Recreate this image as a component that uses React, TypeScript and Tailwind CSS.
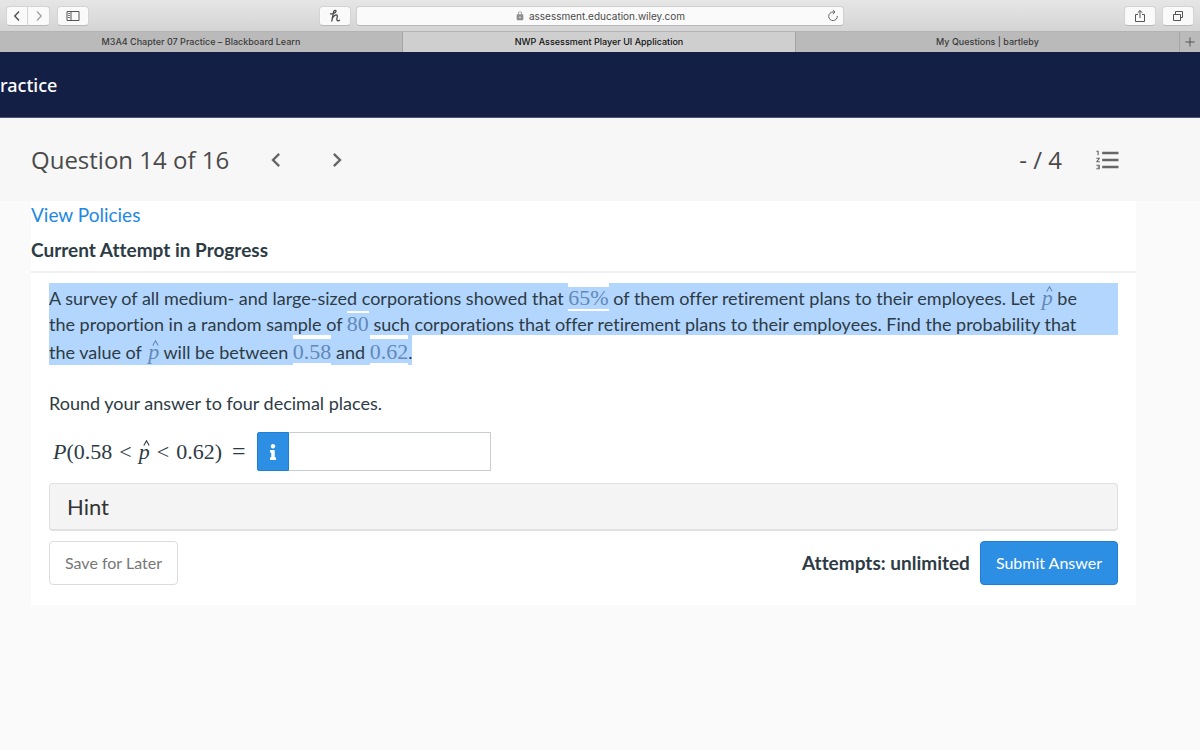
import React from 'react'
import { FaInfo } from 'react-icons/fa'
import { MdChevronLeft, MdChevronRight, MdFormatListNumbered, MdLock } from 'react-icons/md'
import { clsx } from 'clsx'

const tabs = [
  { title: 'M3A4 Chapter 07 Practice – Blackboard Learn', active: false, size: 'flex-[403]' },
  { title: 'NWP Assessment Player UI Application', active: true, size: 'flex-[393]' },
  { title: 'My Questions | bartleby', active: false, size: 'flex-[383]' },
]

interface ToolbarButtonProps {
  label: string
  className?: string
  children: React.ReactNode
}

function ToolbarButton({ label, className, children }: ToolbarButtonProps) {
  return (
    <button
      type="button"
      aria-label={label}
      className={clsx(
        'flex h-5 shrink-0 items-center justify-center rounded-[4px] border border-[#d4d4d4] border-b-[#b9b9b9] bg-[#fafafa] text-[#555]',
        className
      )}
    >
      {children}
    </button>
  )
}

function BrowserToolbar() {
  return (
    <div className="flex h-8 items-center border-b border-[#b4b4b4] bg-linear-to-b from-[#e6e6e6] to-[#d4d4d4] px-1.5">
      <div className="flex flex-[313]">
        <ToolbarButton label="Back" className="w-[22px] rounded-r-none">
          <svg width="8" height="12" viewBox="0 0 8 12" fill="none" stroke="currentColor" strokeWidth="1.5">
            <path d="M6 1.5 1.8 6 6 10.5" />
          </svg>
        </ToolbarButton>
        <ToolbarButton label="Forward" className="mr-[7px] w-[22px] rounded-l-none border-l-0">
          <svg width="8" height="12" viewBox="0 0 8 12" fill="none" stroke="#9c9c9c" strokeWidth="1.2">
            <path d="M2 1.5 6.2 6 2 10.5" />
          </svg>
        </ToolbarButton>
        <ToolbarButton label="Show sidebar" className="w-8">
          <svg width="14" height="12" viewBox="0 0 14 12" fill="none" stroke="currentColor">
            <path d="M1 1.5h12v9H1zM5 1.5v9" />
            <path d="M2 3.5h2M2 5.5h2M2 7.5h2" strokeWidth=".8" />
          </svg>
        </ToolbarButton>
      </div>

      <div className="flex flex-[525] gap-[5px]">
        <ToolbarButton label="Honey" className="w-8">
          <svg width="12" height="14" viewBox="0 0 12 14" fill="none" stroke="#4a4a4a" strokeWidth="1.3" strokeLinecap="round">
            <path d="M1.5 4.8C4 5 7 4 7 2.3 7 .9 5.2 1 4.6 2.8L2.8 12" />
            <path d="M3.4 9C5 6.2 8 4.8 8.3 6.6c.2 1.2-.7 2.8-.4 4.2.3 1.2 1.6 1.3 2.6.4" />
          </svg>
        </ToolbarButton>
        <div className="relative flex h-5 flex-1 items-center justify-center gap-1 rounded-[4px] border border-[#d0d0d0] border-b-[#b9b9b9] bg-[#fafafa]">
          <MdLock size={10} className="text-[#8e8e8e]" />
          <input
            aria-label="Address"
            defaultValue="assessment.education.wiley.com"
            className="field-sizing-content bg-transparent text-[10px] leading-4 text-[#4a4a4a] outline-none"
          />
          <button type="button" aria-label="Reload" className="absolute right-1 text-[#666]">
            <svg width="12" height="12" viewBox="0 0 12 12" fill="none" stroke="currentColor">
              <path d="M10.3 6A4.3 4.3 0 1 1 6 2h1.5" />
              <path d="M5.8 0 8 2 5.8 4" />
            </svg>
          </button>
        </div>
      </div>

      <div className="flex flex-[350] justify-end gap-1.5">
        <ToolbarButton label="Share" className="w-8">
          <svg width="12" height="14" viewBox="0 0 12 14" fill="none" stroke="currentColor">
            <path d="M4 5.5H1.5v7h9v-7H8M6 9V1.5M3.7 3.8 6 1.5l2.3 2.3" />
          </svg>
        </ToolbarButton>
        <ToolbarButton label="Show all tabs" className="w-8">
          <svg width="12" height="12" viewBox="0 0 12 12" fill="none" stroke="currentColor">
            <path d="M1.5 4.5h7v6h-7zM3.5 4V1.5h7v6H9" />
          </svg>
        </ToolbarButton>
      </div>
    </div>
  )
}

function TabStrip() {
  return (
    <div className="flex h-5 bg-[#bababa]">
      {tabs.map((tab) => (
        <button
          key={tab.title}
          type="button"
          className={clsx(
            'min-w-0 truncate border-r border-[#a5a5a5] px-2 text-[9px] font-medium',
            tab.size,
            tab.active ? 'bg-[#cfcfcf] text-[#111]' : 'text-[#3a3a3a]'
          )}
        >
          {tab.title}
        </button>
      ))}
      <button type="button" aria-label="New tab" className="flex flex-[21] items-center justify-center text-[#555]">
        <svg width="10" height="10" viewBox="0 0 10 10" fill="none" stroke="currentColor">
          <path d="M5 .5v9M.5 5h9" />
        </svg>
      </button>
    </div>
  )
}

// The accent sits clear of the letter, as in typeset math
function PHat() {
  return (
    <span className="relative inline-block leading-none">
      <i>p</i>
      <svg
        className="absolute -top-px left-1"
        width="7"
        height="6"
        viewBox="0 0 7 6"
        fill="none"
        stroke="currentColor"
        strokeWidth="1.1"
        aria-hidden="true"
      >
        <path d="M.8 5.5 3.5.8l2.7 4.7" />
      </svg>
    </span>
  )
}

// Math inside the highlighted text is tinted by the selection colour
function SelectedMath({ className, children }: { className: string; children: React.ReactNode }) {
  return (
    <span className={clsx("border-white font-['Liberation_Serif',serif] text-[22px] text-[#6289b8]", className)}>
      {children}
    </span>
  )
}

function QuestionText() {
  const number = 'inline-block align-top leading-[22px]'

  return (
    <p className="text-lg">
      <span className="block bg-[#b3d6ff] pt-0.5 leading-[26px]">
        A survey of all medium- and large-sized corporations showed that{' '}
        <SelectedMath className={clsx(number, '-mt-0.5 border-t-4 border-b-2')}>65%</SelectedMath> of them offer
        retirement plans to their employees. Let{' '}
        <SelectedMath className="pl-0.5 leading-none"><PHat /></SelectedMath> be
      </span>
      <span className="block bg-[#b3d6ff] pt-0.5 leading-[22px]">
        the proportion in a random sample of{' '}
        <SelectedMath className={clsx(number, '-mt-0.5 border-t-2')}>80</SelectedMath> such corporations that offer
        retirement plans to their employees. Find the probability that
      </span>
      <span className="block w-fit bg-[#b3d6ff] pt-1 leading-[26px]">
        the value of <SelectedMath className="pl-0.5 leading-none"><PHat /></SelectedMath> will be between{' '}
        <SelectedMath className={clsx(number, '-mt-1 border-t-4 border-b-2 pt-0.5')}>0.58</SelectedMath> and{' '}
        <SelectedMath className={clsx(number, '-mt-1 border-t-4 border-b-2 pt-0.5')}>0.62</SelectedMath>.
      </span>
    </p>
  )
}

export default function App() {
  return (
    <div className="min-h-screen bg-[#fafafa] font-[Lato,sans-serif] [font-variant-ligatures:none]">
      <div className="font-[Inter,sans-serif]">
        <BrowserToolbar />
        <TabStrip />
      </div>

      <header className="flex h-[66px] items-center border-b border-[#4a5478] bg-[#131f45]">
        <span className="font-['Noto_Sans',sans-serif] text-lg font-medium text-white">ractice</span>
      </header>

      <div className="flex h-[83px] items-center bg-[#f7f7f7] pr-[78px] pl-[31px] font-['Open_Sans',sans-serif] text-2xl text-[#4a4a4a]">
        <h1>Question 14 of 16</h1>
        <button type="button" aria-label="Previous question" className="ml-[33px] text-[#666]">
          <MdChevronLeft size={28} />
        </button>
        <button type="button" aria-label="Next question" className="ml-[33px] text-[#666]">
          <MdChevronRight size={28} />
        </button>
        <span className="ml-auto">- / 4</span>
        <button type="button" aria-label="Question list" className="ml-8 text-[#666]">
          <MdFormatListNumbered size={28} />
        </button>
      </div>

      <main className="mr-16 ml-[31px] bg-white pb-5 text-[#2d3b45]">
        <a href="#policies" className="block text-[19px] leading-7 text-[#1e88e5]">
          View Policies
        </a>
        <h2 className="border-b-2 border-[#f0f0f0] py-[7px] text-[19px] leading-7 font-bold">
          Current Attempt in Progress
        </h2>

        <div className="px-[18px] pt-2.5">
          <QuestionText />
          <p className="pt-6 text-lg leading-7">Round your answer to four decimal places.</p>

          <div className="mt-[15px] flex items-center">
            <label htmlFor="answer" className="mr-[11px] ml-1 font-['Liberation_Serif',serif] text-[22px]">
              <i>P</i>(0.58<span className="mx-[7px]">&lt;</span>
              <PHat />
              <span className="mx-[7px]">&lt;</span>0.62)<span className="ml-2.5 text-2xl">=</span>
            </label>
            <button
              type="button"
              aria-label="Answer information"
              className="flex h-[39px] w-8 items-center justify-center rounded-l-[2px] border border-[#1f7fd4] bg-[#2d8fe3] text-white"
            >
              <FaInfo size={16} />
            </button>
            <input
              id="answer"
              type="text"
              className="h-[39px] w-[202px] border border-l-0 border-[#c7cdd1] bg-white px-2 text-lg outline-none"
            />
          </div>

          <button
            type="button"
            className="mt-3 block h-12 w-full rounded-[4px] border border-b-2 border-[#e0e0e0] bg-[#f4f4f4] px-[17px] text-left text-[22px] text-[#333]"
          >
            Hint
          </button>

          <div className="mt-2.5 flex items-center">
            <button
              type="button"
              className="h-11 rounded-[4px] border border-[#dcdcdc] bg-white px-[15px] text-base text-[#777]"
            >
              Save for Later
            </button>
            <strong className="mr-2.5 ml-auto text-[19px]">Attempts: unlimited</strong>
            <button
              type="button"
              className="h-11 rounded-[4px] border border-[#1f7fd4] bg-[#2d8fe3] px-[15px] text-base text-white"
            >
              Submit Answer
            </button>
          </div>
        </div>
      </main>
    </div>
  )
}
